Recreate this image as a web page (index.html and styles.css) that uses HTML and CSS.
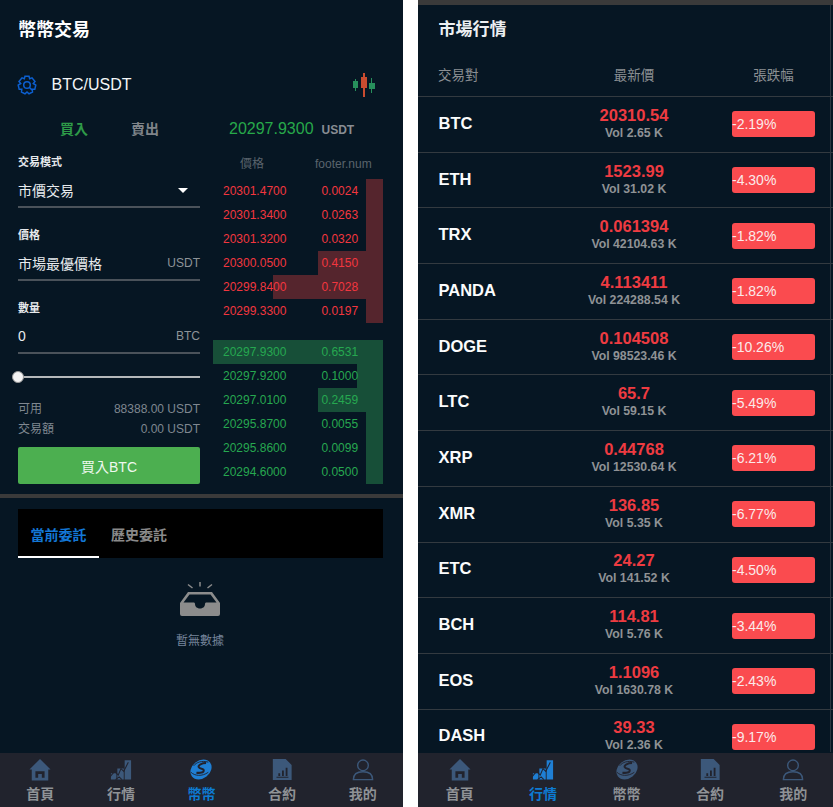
FILE: index.html
```html
<!DOCTYPE html>
<html lang="zh-Hant">
<head>
<meta charset="utf-8">
<title>幣幣交易</title>
<link rel="stylesheet" href="styles.css">
</head>
<body>
<svg class="defs" width="0" height="0" aria-hidden="true">
  <symbol id="i-home" viewBox="0 0 24 24"><path fill="currentColor" fill-rule="evenodd" d="M12 0.500 L23.500 12 H21 V24 H3 V12 H0.500 Z M7 14 V21 H10 V17 H14 V21 H17 V14 Z"/></symbol>
  <symbol id="i-chart" viewBox="0 0 24 24"><path fill="currentColor" d="M1 23 V16 H7 V23 Z M8 23 V11 H15 V23 Z M16 23 V2 H23 V23 Z"/><g fill="none" stroke="#22232e" stroke-width="1.100"><path d="M0 20 L5 14 L9 18 L12 11 L15 14 L20 4"/><path d="M6 23 L10 20 L13 23"/></g></symbol>
  <symbol id="i-coin" viewBox="0 0 24 24"><ellipse cx="12" cy="12" rx="12.500" ry="9.800" fill="currentColor" transform="rotate(-38 12 12)"/><g fill="none" stroke="#22232e"><path stroke-width="2.200" d="M17.500 5 C13 5 8.500 7 9.500 9.500 C10.500 12 15 10.500 15 13 C15 15.500 11 16 7 15.500"/><path stroke-width="1" d="M1 15 C5 19 13 20 20 15"/><path stroke-width="1" d="M4 8 C7 4 13 2 20 4"/></g></symbol>
  <symbol id="i-doc" viewBox="0 0 24 24"><path fill="currentColor" fill-rule="evenodd" d="M2 0.500 H16 L22.500 7 V23.500 H2 Z M6 20 V21 H19 V20 Z M8 16 V19 H10 V16 Z M12 13 V19 H14 V13 Z M16 10 V19 H18 V10 Z"/></symbol>
  <symbol id="i-user" viewBox="0 0 24 24"><g fill="none" stroke="currentColor" stroke-width="1.500"><circle cx="12" cy="7.500" r="5.800"/><path d="M1.500 23 C1.500 17 6 14.500 12 14.500 C18 14.500 22.500 17 22.500 23 Z"/></g></symbol>
</svg>

<main class="screens">
  <section class="phone phone-trade">
    <h1 class="title">幣幣交易</h1>
    <div class="pair">
      <svg class="gear" viewBox="0 0 20 20" width="20" height="20"><g fill="none" stroke="currentColor" stroke-width="1.500"><path d="M8 1.200 H12 L12.700 3.700 L15 2.800 L18 6.500 L16.300 8.500 L18.800 10 L17.800 14.300 L15.200 14.300 L15.500 17 L12 18.800 L10 17 L8 18.800 L4.500 17 L4.800 14.300 L2.200 14.300 L1.200 10 L3.700 8.500 L2 6.500 L5 2.800 L7.300 3.700 Z"/><circle cx="10" cy="10" r="3.300"/><path d="M12.500 12.500 L15 15"/></g></svg>
      <span class="pair-name">BTC/USDT</span>
      <svg class="candles" viewBox="0 0 24 25" width="24" height="25"><path class="up" d="M3 6 H4 V18 H3 Z M1 8 H6 V15 H1 Z M19 5 H20 V20 H19 Z M17 10 H23 V16 H17 Z"/><path class="down" d="M11 0 H13 V24 H11 Z M9 4 H15 V15 H9 Z"/></svg>
    </div>

    <div class="trade-top">
      <div class="side-tabs">
        <span class="side side-buy">買入</span>
        <span class="side side-sell">賣出</span>
      </div>
      <div class="last-price"><span class="last-num">20297.9300</span><span class="last-unit">USDT</span></div>
    </div>

    <div class="trade-body">
      <div class="form">
        <div class="label">交易模式</div>
        <div class="field"><span class="field-value">市價交易</span><span class="caret"></span></div>
        <div class="label label-next">價格</div>
        <div class="field"><span class="field-value">市場最優價格</span><span class="unit">USDT</span></div>
        <div class="label label-next">數量</div>
        <div class="field"><span class="field-value">0</span><span class="unit">BTC</span></div>
        <div class="slider"><span class="knob"></span></div>
        <div class="info"><span>可用</span><span>88388.00 USDT</span></div>
        <div class="info"><span>交易額</span><span>0.00 USDT</span></div>
        <button class="buy-btn" type="button">買入BTC</button>
      </div>

      <div class="book">
        <div class="book-head"><span class="book-price-head">價格</span><span class="book-qty-head">footer.num</span></div>
        <div class="book-side asks">
          <div class="book-row"><i class="depth" style="width:17px"></i><span>20301.4700</span><span>0.0024</span></div>
          <div class="book-row"><i class="depth" style="width:17px"></i><span>20301.3400</span><span>0.0263</span></div>
          <div class="book-row"><i class="depth" style="width:17px"></i><span>20301.3200</span><span>0.0320</span></div>
          <div class="book-row"><i class="depth" style="width:65px"></i><span>20300.0500</span><span>0.4150</span></div>
          <div class="book-row"><i class="depth" style="width:110px"></i><span>20299.8400</span><span>0.7028</span></div>
          <div class="book-row"><i class="depth" style="width:17px"></i><span>20299.3300</span><span>0.0197</span></div>
        </div>
        <div class="book-side bids">
          <div class="book-row"><i class="depth" style="width:170px"></i><span>20297.9300</span><span>0.6531</span></div>
          <div class="book-row"><i class="depth" style="width:26px"></i><span>20297.9200</span><span>0.1000</span></div>
          <div class="book-row"><i class="depth" style="width:65px"></i><span>20297.0100</span><span>0.2459</span></div>
          <div class="book-row"><i class="depth" style="width:17px"></i><span>20295.8700</span><span>0.0055</span></div>
          <div class="book-row"><i class="depth" style="width:17px"></i><span>20295.8600</span><span>0.0099</span></div>
          <div class="book-row"><i class="depth" style="width:17px"></i><span>20294.6000</span><span>0.0500</span></div>
        </div>
      </div>
    </div>

    <div class="divider"></div>

    <div class="order-tabs">
      <span class="order-tab is-active">當前委託</span>
      <span class="order-tab">歷史委託</span>
    </div>
    <div class="empty">
      <svg class="empty-icon" viewBox="0 0 42 36" width="42" height="36"><g fill="none" stroke="#8c8c8c" stroke-width="1.500"><path d="M21 1 V5.500 M9 3.500 L13.500 7 M33 3.500 L28.500 7"/></g><path fill="#8c8c8c" fill-rule="evenodd" d="M9 11 H33 L41 22 V33 Q41 35 39 35 H3 Q1 35 1 33 V22 Z M10.500 13.500 L4.500 21.500 H15 Q16 21.500 16 23 C16 29 26 29 26 23 Q26 21.500 27 21.500 H37.500 L31.500 13.500 Z"/></svg>
      <p class="empty-text">暫無數據</p>
    </div>

    <nav class="tabbar">
      <a class="tab"><svg class="tab-icon"><use href="#i-home"/></svg><span>首頁</span></a>
      <a class="tab"><svg class="tab-icon"><use href="#i-chart"/></svg><span>行情</span></a>
      <a class="tab is-active"><svg class="tab-icon"><use href="#i-coin"/></svg><span>幣幣</span></a>
      <a class="tab"><svg class="tab-icon"><use href="#i-doc"/></svg><span>合約</span></a>
      <a class="tab"><svg class="tab-icon"><use href="#i-user"/></svg><span>我的</span></a>
    </nav>
  </section>

  <section class="phone phone-market">
    <div class="topbar"></div>
    <h2 class="market-title">市場行情</h2>
    <div class="market-head"><span>交易對</span><span class="col-price">最新價</span><span class="col-change">張跌幅</span></div>
    <div class="market-list">
      <div class="m-row"><b class="m-name">BTC</b><div class="m-price"><b>20310.54</b><span>Vol 2.65 K</span></div><span class="m-badge">-2.19%</span></div>
      <div class="m-row"><b class="m-name">ETH</b><div class="m-price"><b>1523.99</b><span>Vol 31.02 K</span></div><span class="m-badge">-4.30%</span></div>
      <div class="m-row"><b class="m-name">TRX</b><div class="m-price"><b>0.061394</b><span>Vol 42104.63 K</span></div><span class="m-badge">-1.82%</span></div>
      <div class="m-row"><b class="m-name">PANDA</b><div class="m-price"><b>4.113411</b><span>Vol 224288.54 K</span></div><span class="m-badge">-1.82%</span></div>
      <div class="m-row"><b class="m-name">DOGE</b><div class="m-price"><b>0.104508</b><span>Vol 98523.46 K</span></div><span class="m-badge">-10.26%</span></div>
      <div class="m-row"><b class="m-name">LTC</b><div class="m-price"><b>65.7</b><span>Vol 59.15 K</span></div><span class="m-badge">-5.49%</span></div>
      <div class="m-row"><b class="m-name">XRP</b><div class="m-price"><b>0.44768</b><span>Vol 12530.64 K</span></div><span class="m-badge">-6.21%</span></div>
      <div class="m-row"><b class="m-name">XMR</b><div class="m-price"><b>136.85</b><span>Vol 5.35 K</span></div><span class="m-badge">-6.77%</span></div>
      <div class="m-row"><b class="m-name">ETC</b><div class="m-price"><b>24.27</b><span>Vol 141.52 K</span></div><span class="m-badge">-4.50%</span></div>
      <div class="m-row"><b class="m-name">BCH</b><div class="m-price"><b>114.81</b><span>Vol 5.76 K</span></div><span class="m-badge">-3.44%</span></div>
      <div class="m-row"><b class="m-name">EOS</b><div class="m-price"><b>1.1096</b><span>Vol 1630.78 K</span></div><span class="m-badge">-2.43%</span></div>
      <div class="m-row"><b class="m-name">DASH</b><div class="m-price"><b>39.33</b><span>Vol 2.36 K</span></div><span class="m-badge">-9.17%</span></div>
    </div>
    <nav class="tabbar">
      <a class="tab"><svg class="tab-icon"><use href="#i-home"/></svg><span>首頁</span></a>
      <a class="tab is-active"><svg class="tab-icon"><use href="#i-chart"/></svg><span>行情</span></a>
      <a class="tab"><svg class="tab-icon"><use href="#i-coin"/></svg><span>幣幣</span></a>
      <a class="tab"><svg class="tab-icon"><use href="#i-doc"/></svg><span>合約</span></a>
      <a class="tab"><svg class="tab-icon"><use href="#i-user"/></svg><span>我的</span></a>
    </nav>
    <div class="scroll-line"></div>
  </section>
</main>
</body>
</html>
```

FILE: styles.css
```css
* { box-sizing: border-box; }
html, body { margin: 0; padding: 0; background: #fff; overflow: hidden; }
body {
  width: 833px;
  height: 807px;
  font-family: "Liberation Sans", "Noto Sans CJK TC", sans-serif;
  color: #fff;
}
.defs { position: absolute; }
.screens { display: flex; width: 835px; height: 807px; }
.phone {
  position: relative;
  display: flex;
  flex-direction: column;
  height: 807px;
  background: #061623;
  overflow: hidden;
}
.phone-trade { width: 403px; }
.phone-market { width: 417px; margin-left: 15px; }

/* trade header */
.title { margin: 0; height: 61px; padding-left: 18px; font-size: 18px; line-height: 61px; font-weight: 700; }
.pair { display: flex; align-items: center; height: 48px; padding: 0 27px 0 17px; }
.gear { color: #0c5fd0; flex: none; }
.pair-name { margin-left: 14.500px; font-size: 16px; color: #f4f6f8; flex: 1; }
.candles { flex: none; }
.candles .up { fill: #27905c; }
.candles .down { fill: #c94c30; }

.trade-top { display: flex; align-items: center; height: 39px; }
.side-tabs { display: flex; width: 229px; padding-left: 60px; gap: 43px; }
.side { font-size: 14px; font-weight: 700; line-height: 20px; }
.side-buy { color: #2e9a48; }
.side-sell { color: #7f8489; }
.last-price { display: flex; align-items: baseline; }
.last-num { font-size: 16px; color: #27a84a; }
.last-unit { margin-left: 8px; font-size: 12px; font-weight: 700; color: #888d93; }

.trade-body { display: flex; height: 346px; padding: 0 20px 10px 18px; gap: 13px; }

/* order form */
.form { display: flex; flex-direction: column; width: 182px; padding-top: 1px; }
.label { height: 26px; font-size: 11px; font-weight: 700; line-height: 26px; color: #e6e9ec; }
.label-next { margin-top: 14px; }
.field {
  display: flex;
  align-items: center;
  justify-content: space-between;
  height: 33px;
  padding-bottom: 1px;
  border-bottom: 2px solid #4a525a;
}
.field-value { font-size: 14px; color: #e8ebee; }
.unit { font-size: 12px; font-weight: 400; color: #8e9398; }
.caret { width: 0; height: 0; margin-right: 12px; border: 5px solid transparent; border-top-color: #fff; border-bottom: 0; }
.slider { position: relative; height: 45px; display: flex; align-items: center; }
.slider::before { content: ""; display: block; width: 100%; height: 2px; background: #b5b8ba; }
.knob {
  position: absolute;
  left: -6px;
  top: 17px;
  width: 12px;
  height: 12px;
  border-radius: 50%;
  background: #f4f4f4;
  border: 1px solid #999;
}
.info { display: flex; justify-content: space-between; height: 20px; font-size: 12px; line-height: 20px; color: #7f8790; }
.buy-btn {
  margin-top: 8px;
  height: 37px;
  border: 0;
  border-radius: 2px;
  background: #4caf50;
  color: #eef8ee;
  font: 400 14px "Liberation Sans", "Noto Sans CJK TC", sans-serif;
}

/* order book */
.book { width: 170px; }
.book-head { position: relative; height: 31px; font-size: 12px; line-height: 33px; color: #5a646d; }
.book-price-head { margin-left: 27px; }
.book-qty-head { position: absolute; left: 102px; }
.book-side { display: flex; flex-direction: column; }
.bids { margin-top: 17px; }
.book-row {
  position: relative;
  display: flex;
  height: 24px;
  padding-left: 10px;
  gap: 35px;
  font-size: 12px;
  line-height: 24px;
}
.book-row span { position: relative; }
.depth { position: absolute; top: 0; right: 0; bottom: 0; }
.asks .book-row { color: #f2363f; }
.asks .depth { background: #55252d; }
.bids .book-row { color: #26a850; }
.bids .depth { background: #174f38; }

.divider { flex: none; height: 4px; background: #3a3a3a; }

/* orders */
.order-tabs { display: flex; height: 49px; margin: 11px 20px 0 18px; background: #000; }
.order-tab {
  width: 81px;
  padding-top: 16px;
  text-align: center;
  font-size: 14px;
  font-weight: 700;
  line-height: 20px;
  color: #8a8a8a;
  margin-right: 0;
}
.order-tab.is-active { color: #1377d6; border-bottom: 2px solid #fff; }
.order-tab + .order-tab { width: 80px; margin-left: 0; padding-left: 12px; padding-right: 12px; text-align: left; }
.empty { display: flex; flex-direction: column; align-items: center; flex: 1; padding-top: 23px; padding-right: 3px; }
.empty-icon { flex: none; }
.empty-text { margin: 15px 0 0; font-size: 12px; line-height: 18px; color: #76859b; }

/* bottom nav */
.tabbar { display: flex; flex: none; height: 54px; background: #21232d; }
.tab {
  flex: 1;
  display: flex;
  flex-direction: column;
  align-items: center;
  padding-top: 5px;
  font-size: 14px;
  font-weight: 700;
  line-height: 18px;
  color: #8f9296;
}
.tab-icon { width: 22px; height: 23px; margin-bottom: 4px; color: #3c587a; }
.tab.is-active { color: #0d7bd2; }
.tab.is-active .tab-icon { color: #1f7fd4; }

/* market */
.topbar { flex: none; height: 5px; background: #3a3a3a; }
.market-title { flex: none; margin: 0; height: 51px; padding-left: 20.500px; font-size: 17px; line-height: 50px; font-weight: 700; color: #eceff2; }
.market-head {
  flex: none;
  display: grid;
  grid-template-columns: 126px 140px 28px 83px;
  height: 41px;
  padding-left: 20px;
  font-size: 13.500px;
  line-height: 40px;
  color: #8b8f93;
  border-bottom: 1px solid #333a40;
}
.col-price { text-align: center; }
.col-change { grid-column: 4; text-align: center; }
.market-list { flex: 1; overflow: hidden; }
.m-row {
  display: grid;
  grid-template-columns: 125.500px 140px 28px 83px;
  align-items: center;
  height: 55.700px;
  padding: 0 0 2px 20.500px;
  border-bottom: 1px solid #333a40;
}
.m-name { font-size: 16.500px; color: #fbfcfd; }
.m-price { display: flex; flex-direction: column; align-items: center; }
.m-price b { font-size: 16.500px; line-height: 20px; color: #ee3b41; }
.m-price span { font-size: 12.300px; font-weight: 700; line-height: 17px; color: #8f9295; }
.m-badge {
  grid-column: 4;
  height: 26px;
  margin-top: 2px;
  border-radius: 3px;
  background: #fa4b4f;
  font-size: 14px;
  line-height: 26px;
  color: #fbeaea;
}
.scroll-line { position: absolute; top: 5px; right: 4px; bottom: 55px; width: 1px; background: #2b3640; }
```
